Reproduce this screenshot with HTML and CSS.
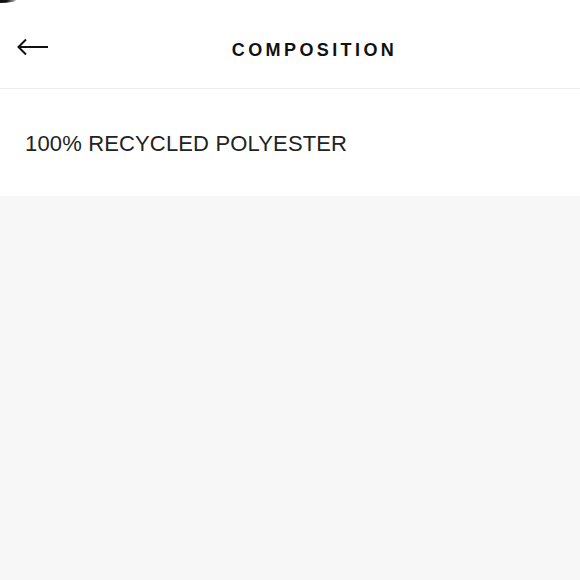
FILE: index.html
```html
<!DOCTYPE html>
<html lang="en">
<head>
    <meta charset="UTF-8">
    <meta name="viewport" content="width=device-width, initial-scale=1.0">
    <title>Composition</title>
    <link rel="stylesheet" href="styles.css">
</head>
<body>

<div class="sheet">
    <div class="header">
        <button class="back" aria-label="Back">
            <svg width="32" height="18" viewBox="0 0 32 18">
                <path d="M1.5 9 H31 M9 1.5 L1.5 9 L9 16.5" fill="none" stroke="#111" stroke-width="2"/>
            </svg>
        </button>
        <h1 class="title">COMPOSITION</h1>
    </div>

    <div class="content">
        <p class="material">100% RECYCLED POLYESTER</p>
    </div>
</div>

</body>
</html>
```

FILE: styles.css
```css
body {
    margin: 0;
    font-family: 'Liberation Sans', Arial, sans-serif;
    background-color: #f7f7f7;
    color: #1a1a1a;
}
.sheet {
    background-color: #ffffff;
    position: relative;
}
/* corner of the screen behind the sheet */
.sheet::before {
    content: '';
    position: absolute;
    top: 0;
    left: 0;
    width: 16px;
    height: 3px;
    background: linear-gradient(to right, #111 40%, #bbb);
    border-bottom-right-radius: 16px 3px;
}
.header {
    box-sizing: border-box;
    height: 89px;
    display: flex;
    align-items: center;
    border-bottom: 1px solid #ebebeb;
    padding: 6px 0 0 17px;
}
.back {
    background: none;
    border: none;
    padding: 0;
    width: 32px;
    height: 18px;
    cursor: pointer;
}
.title {
    flex: 1;
    margin: 0;
    padding-top: 7px;
    text-align: center;
    font-size: 18px;
    font-weight: bold;
    letter-spacing: 3.4px;
    color: #111;
}
.content {
    height: 107px;
    padding: 0 25px;
}
.material {
    margin: 0;
    padding-top: 42px;
    font-size: 22px;
    letter-spacing: 0.15px;
    line-height: 26px;
    color: #222;
}
```
